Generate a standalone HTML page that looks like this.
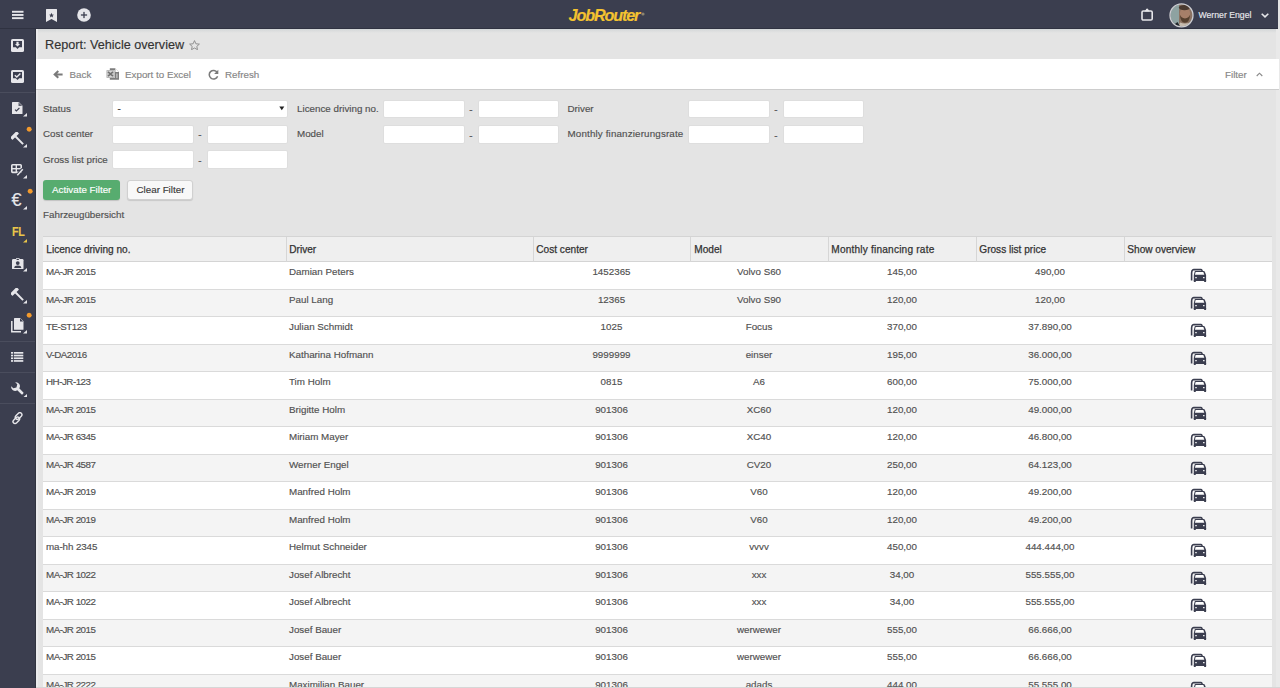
<!DOCTYPE html>
<html><head><meta charset="utf-8"><style>
*{margin:0;padding:0;box-sizing:border-box}
html,body{width:1280px;height:688px;overflow:hidden;background:#e4e4e4;font-family:"Liberation Sans",sans-serif;color:#505050}
.t{position:absolute;white-space:nowrap;line-height:10px;font-size:9.8px;-webkit-text-stroke:0.15px currentColor}
.abs{position:absolute;display:block}
#top{position:absolute;left:0;top:0;width:1278px;height:29px;background:#3b3e4f;border-bottom:1px solid #2f3241}
#side{position:absolute;left:0;top:29px;width:36px;height:659px;background:#3b3e4f;border-right:1px solid #30333f}
.sep{position:absolute;left:0;width:35px;height:1px;background:#4a4d5d}
#tb{position:absolute;left:36px;top:59px;width:1243px;height:31px;background:#fff;border-bottom:1px solid #cdcdcd}
.tbt{color:#858585}
.inp{position:absolute;background:#fff;border-radius:2px;border:1px solid #dedede}
.hd{color:#333;-webkit-text-stroke:0.25px #333;font-size:10.1px}
.c{text-align:center}
</style></head><body>
<div class="abs" style="left:36px;top:29px;width:1240px;height:3.5px;background:linear-gradient(#d3d6d8,#e4e4e4)"></div>
<div id="top"></div>
<div id="side"></div>
<div class="abs" style="left:36px;top:29px;width:2px;height:659px;background:#ebebed"></div>
<div class="abs" style="left:1276px;top:29px;width:4px;height:659px;background:#e9e9e9"></div>
<div class="sep" style="top:92px"></div>
<div class="sep" style="top:341px"></div>
<div class="sep" style="top:372px"></div>
<div class="sep" style="top:403px"></div>
<svg class="abs" style="left:12px;top:10px" width="12" height="10" viewBox="0 0 12 10"><rect x="0" y="0.8" width="11.5" height="1.9" fill="#e6e6ea"/><rect x="0" y="4" width="11.5" height="1.9" fill="#e6e6ea"/><rect x="0" y="7.2" width="11.5" height="1.9" fill="#e6e6ea"/></svg>
<svg class="abs" style="left:46px;top:8.5px" width="11" height="13" viewBox="0 0 11 13"><path d="M0 0.5Q0 0 0.5 0H10.5Q11 0 11 0.5V13L5.5 10L0 13Z" fill="#e6e6ea"/><path d="M5.5 3.8L6.2 5.6L8 5.7L6.6 6.8L7.1 8.6L5.5 7.6L3.9 8.6L4.4 6.8L3 5.7L4.8 5.6Z" fill="#3b3e4f"/></svg>
<svg class="abs" style="left:77px;top:7.5px" width="14" height="14" viewBox="0 0 14 14"><circle cx="7" cy="7" r="6.8" fill="#e6e6ea"/><rect x="3.9" y="6.35" width="6.2" height="1.3" fill="#3b3e4f"/><rect x="6.35" y="3.9" width="1.3" height="6.2" fill="#3b3e4f"/></svg>
<div class="t " style="left:568.6px;top:7.0px;font-size:16.2px;line-height:17px;font-weight:bold;font-style:italic;color:#f4c330;letter-spacing:-1.15px">JobRouter</div>
<svg class="abs" style="left:640.5px;top:12px" width="4" height="4" viewBox="0 0 4 4"><circle cx="2" cy="2" r="1.6" fill="#8a8470"/></svg>
<svg class="abs" style="left:1141px;top:8px" width="12" height="13" viewBox="0 0 12 13"><rect x="1" y="3" width="10.2" height="9" rx="1.3" fill="none" stroke="#e6e6ea" stroke-width="1.6"/><path d="M3.6 3.4Q3.8 2.4 4.6 2.2Q4.8 0.5 6.1 0.5Q7.4 0.5 7.6 2.2Q8.4 2.4 8.6 3.4Z" fill="#e6e6ea"/></svg>
<svg class="abs" style="left:1168.5px;top:2.5px" width="25" height="25" viewBox="0 0 25 25"><defs><clipPath id="av"><circle cx="12.5" cy="12.3" r="11"/></clipPath></defs>
<g clip-path="url(#av)"><rect width="25" height="25" fill="#8ea2a1"/>
<rect x="10" y="0" width="15" height="25" fill="#8b7262"/>
<ellipse cx="16" cy="11" rx="5.3" ry="6.8" fill="#a67f69"/>
<ellipse cx="15.5" cy="4.6" rx="5.6" ry="2.6" fill="#4a3a30"/>
<path d="M10.8 11.5Q11.5 19.5 16 19.8Q20.5 19.5 21.2 11.5Q20 15 16 15.5Q12 15 10.8 11.5Z" fill="#55402f"/>
<path d="M9 25L11 19.5Q16 21.5 21 19.5L25 22V25Z" fill="#c6bbae"/>
<path d="M2 24L8.5 19L12 25Z" fill="#22262a"/></g>
<circle cx="12.5" cy="12.3" r="11.5" fill="none" stroke="#cdcdd1" stroke-width="1.3"/></svg>
<div class="t " style="left:1198.5px;top:10.6px;font-size:8.7px;line-height:9px;color:#e8e8ec">Werner Engel</div>
<svg class="abs" style="left:1261px;top:12.5px" width="8" height="5" viewBox="0 0 8 5"><path d="M0.7 0.7L4 3.9L7.3 0.7" fill="none" stroke="#e6e6ea" stroke-width="1.6"/></svg>
<svg class="abs" style="left:11px;top:39px" width="13" height="13" viewBox="0 0 13 13"><rect width="13" height="13" rx="1.6" fill="#e6e6ea"/><path d="M2 2H11V8.3H8.2L6.5 10L4.8 8.3H2Z" fill="#3b3e4f"/><path d="M5.4 2.8H7.6V5H9L6.5 7.6L4 5H5.4Z" fill="#e6e6ea"/></svg>
<svg class="abs" style="left:11px;top:70px" width="13" height="13" viewBox="0 0 13 13"><rect width="13" height="13" rx="1.6" fill="#e6e6ea"/><path d="M2 2H11V8.3H8.2L6.5 10L4.8 8.3H2Z" fill="#3b3e4f"/><path d="M3.8 5.2L5.8 7.1L9.4 3.5" fill="none" stroke="#e6e6ea" stroke-width="1.4"/></svg>
<svg class="abs" style="left:12.3px;top:102px" width="11" height="12" viewBox="0 0 11 12"><path d="M0 0.6Q0 0 0.6 0H6.8L10.5 3.7V11.4Q10.5 12 9.9 12H0.6Q0 12 0 11.4Z" fill="#e6e6ea"/><path d="M6.5 0.3V4H10.2Z" fill="#3b3e4f" opacity="0.8"/><path d="M3 7.6L4.4 9L7.4 6" fill="none" stroke="#3b3e4f" stroke-width="1.1"/></svg>
<svg class="abs" style="left:23px;top:113px" width="4" height="3.5" viewBox="0 0 4 3.5"><path d="M4 0V3.5H0Z" fill="#e6e6ea"/></svg>
<svg class="abs" style="left:11px;top:132px" width="14" height="14" viewBox="0 0 14 14"><g transform="rotate(-45 7 7)"><rect x="2.4" y="0.4" width="9.2" height="3.4" rx="0.6" fill="#e6e6ea"/><rect x="6" y="3.2" width="2" height="11" fill="#e6e6ea"/></g></svg>
<svg class="abs" style="left:23.3px;top:144.3px" width="4" height="3.5" viewBox="0 0 4 3.5"><path d="M4 0V3.5H0Z" fill="#e6e6ea"/></svg>
<svg class="abs" style="left:26.400000000000002px;top:125.99999999999999px" width="6.4" height="6.4" viewBox="0 0 6.4 6.4"><circle cx="3.2" cy="3.2" r="2.5" fill="#f39a2c"/></svg>
<svg class="abs" style="left:11px;top:163.5px" width="13" height="12" viewBox="0 0 13 12"><rect x="0.8" y="0.8" width="9.4" height="7.6" rx="0.8" fill="none" stroke="#e6e6ea" stroke-width="1.6"/><rect x="0.8" y="4" width="9.4" height="1.4" fill="#e6e6ea"/><rect x="4.6" y="0.8" width="1.4" height="7.6" fill="#e6e6ea"/><path d="M6.5 11L11.5 5" stroke="#3b3e4f" stroke-width="3"/><path d="M6.3 11.2L11.8 5.2" stroke="#e6e6ea" stroke-width="1.5"/></svg>
<svg class="abs" style="left:23px;top:175px" width="4" height="3.5" viewBox="0 0 4 3.5"><path d="M4 0V3.5H0Z" fill="#e6e6ea"/></svg>
<div class="t " style="left:11.4px;top:191.2px;font-size:18px;line-height:18px;color:#e6e6ea">&euro;</div>
<svg class="abs" style="left:23px;top:206px" width="4" height="3.5" viewBox="0 0 4 3.5"><path d="M4 0V3.5H0Z" fill="#e6e6ea"/></svg>
<svg class="abs" style="left:26.6px;top:187.5px" width="6.4" height="6.4" viewBox="0 0 6.4 6.4"><circle cx="3.2" cy="3.2" r="2.5" fill="#f39a2c"/></svg>
<div class="t " style="left:12.2px;top:226.2px;font-size:13px;line-height:12px;font-weight:bold;color:#eac64a;letter-spacing:-0.4px;transform:scaleX(0.82);transform-origin:0 0">FL</div>
<svg class="abs" style="left:23px;top:239px" width="4" height="3.5" viewBox="0 0 4 3.5"><path d="M4 0V3.5H0Z" fill="#eac64a"/></svg>
<svg class="abs" style="left:12px;top:257.5px" width="11.5" height="11.5" viewBox="0 0 11.5 11.5"><rect x="0" y="1" width="11.5" height="10.5" rx="1.2" fill="#e6e6ea"/><rect x="4" y="0" width="3.5" height="2.4" rx="0.6" fill="#e6e6ea"/><rect x="4.6" y="0.8" width="2.3" height="1.2" fill="#3b3e4f"/><circle cx="5.75" cy="5.1" r="1.9" fill="#3b3e4f"/><path d="M2.2 9.9Q2.4 7.5 5.75 7.5Q9.1 7.5 9.3 9.9Z" fill="#3b3e4f"/></svg>
<svg class="abs" style="left:23px;top:268px" width="4" height="3.5" viewBox="0 0 4 3.5"><path d="M4 0V3.5H0Z" fill="#e6e6ea"/></svg>
<svg class="abs" style="left:11px;top:288px" width="14" height="14" viewBox="0 0 14 14"><g transform="rotate(-45 7 7)"><rect x="2.4" y="0.4" width="9.2" height="3.4" rx="0.6" fill="#e6e6ea"/><rect x="6" y="3.2" width="2" height="11" fill="#e6e6ea"/></g></svg>
<svg class="abs" style="left:23.3px;top:300px" width="4" height="3.5" viewBox="0 0 4 3.5"><path d="M4 0V3.5H0Z" fill="#e6e6ea"/></svg>
<svg class="abs" style="left:11px;top:318px" width="13" height="14.5" viewBox="0 0 13 14.5"><path d="M0.8 3V13.7H10" fill="none" stroke="#e6e6ea" stroke-width="1.5"/><path d="M3 0.6Q3 0 3.6 0H9.2L12.5 3.3V11.2Q12.5 11.8 11.9 11.8H3.6Q3 11.8 3 11.2Z" fill="#e6e6ea"/><path d="M9 0.3V3.5H12.2Z" fill="#3b3e4f"/></svg>
<svg class="abs" style="left:23px;top:330px" width="4" height="3.5" viewBox="0 0 4 3.5"><path d="M4 0V3.5H0Z" fill="#e6e6ea"/></svg>
<svg class="abs" style="left:26.2px;top:312.3px" width="6.4" height="6.4" viewBox="0 0 6.4 6.4"><circle cx="3.2" cy="3.2" r="2.5" fill="#f39a2c"/></svg>
<svg class="abs" style="left:11.3px;top:351.8px" width="12.3" height="10" viewBox="0 0 12.3 10"><g fill="#e6e6ea"><rect x="0" y="0" width="2" height="1.7"/><rect x="2.8" y="0" width="9.5" height="1.7"/><rect x="0" y="2.7" width="2" height="1.7"/><rect x="2.8" y="2.7" width="9.5" height="1.7"/><rect x="0" y="5.4" width="2" height="1.7"/><rect x="2.8" y="5.4" width="9.5" height="1.7"/><rect x="0" y="8.1" width="2" height="1.7"/><rect x="2.8" y="8.1" width="9.5" height="1.7"/></g></svg>
<svg class="abs" style="left:10.5px;top:381.5px" width="14" height="14" viewBox="0 0 14 14"><g transform="rotate(-45 7 7)"><path d="M4.2 0.2A4 4 0 0 0 5.6 7.4V13.2Q5.6 14 7 14Q8.4 14 8.4 13.2V7.4A4 4 0 0 0 9.8 0.2V3.2L7 4.8L4.2 3.2Z" fill="#e6e6ea"/></g></svg>
<svg class="abs" style="left:23.4px;top:393.5px" width="4" height="3.5" viewBox="0 0 4 3.5"><path d="M4 0V3.5H0Z" fill="#e6e6ea"/></svg>
<svg class="abs" style="left:11px;top:412.3px" width="13" height="13" viewBox="0 0 13 13"><g fill="none" stroke="#e6e6ea" stroke-width="1.4"><rect x="3.80" y="2.00" width="7.6" height="4.0" rx="2.0" transform="rotate(-45 7.6 4.0)"/><rect x="1.50" y="6.30" width="7.6" height="4.0" rx="2.0" transform="rotate(-45 5.3 8.3)"/></g></svg>
<div class="t " style="left:45px;top:39px;font-size:12.65px;line-height:13px;color:#333">Report: Vehicle overview</div>
<svg class="abs" style="left:189px;top:39.8px" width="11" height="10" viewBox="0 0 11 10"><path d="M5.5 0.6L6.9 3.8L10.4 4.1L7.8 6.4L8.5 9.7L5.5 8L2.5 9.7L3.2 6.4L0.6 4.1L4.1 3.8Z" fill="none" stroke="#888" stroke-width="0.9"/></svg>
<div id="tb"></div>
<svg class="abs" style="left:52.5px;top:69.5px" width="10" height="9" viewBox="0 0 10 9"><path d="M9.6 4.4H2.5M5.3 1.1L1.7 4.4L5.3 7.7" fill="none" stroke="#7a7a7a" stroke-width="2.05"/></svg>
<div class="t tbt" style="left:69.5px;top:69.5px;">Back</div>
<svg class="abs" style="left:106px;top:68px" width="14" height="12" viewBox="0 0 14 12"><path d="M3.8 0.3H9.2L13 4V11.8H3.8Z" fill="#7d7d7d"/><path d="M9.4 0.3V4H13Z" fill="#fff"/><rect x="0.3" y="2" width="8.4" height="8" fill="#fff"/><rect x="0.9" y="2.6" width="7.2" height="6.8" fill="#d6d6d6" stroke="#aaa" stroke-width="0.8"/><path d="M2 3.8L7 8.2M7 3.8L2 8.2" stroke="#707070" stroke-width="1.6"/><rect x="10" y="5.5" width="1.7" height="4.6" fill="#b5b5b5"/></svg>
<div class="t tbt" style="left:125px;top:69.5px;">Export to Excel</div>
<svg class="abs" style="left:207.5px;top:69px" width="11" height="11" viewBox="0 0 11 11"><path d="M9.2 3.4A4.3 4.3 0 1 0 9.6 7.2" fill="none" stroke="#7a7a7a" stroke-width="1.5"/><path d="M10.3 0.8V5H6.1Z" fill="#7a7a7a"/></svg>
<div class="t tbt" style="left:225px;top:69.5px;">Refresh</div>
<div class="t tbt" style="left:1225px;top:69.5px;">Filter</div>
<svg class="abs" style="left:1255.5px;top:71.5px" width="7" height="5" viewBox="0 0 7 5"><path d="M0.7 4L3.5 1.2L6.3 4" fill="none" stroke="#8a8a8a" stroke-width="1.15"/></svg>
<div class="t " style="left:43px;top:103.5px;">Status</div>
<div class="t " style="left:43px;top:129px;">Cost center</div>
<div class="t " style="left:43px;top:154.5px;">Gross list price</div>
<div class="t " style="left:297px;top:103.5px;">Licence driving no.</div>
<div class="t " style="left:297px;top:129px;">Model</div>
<div class="t " style="left:567.5px;top:103.5px;">Driver</div>
<div class="t " style="left:567.5px;top:129px;letter-spacing:0.15px">Monthly finanzierungsrate</div>
<div class="inp" style="left:112px;top:99.5px;width:176px;height:18.5px"></div>
<div class="t " style="left:117.5px;top:103.5px;color:#333">-</div>
<svg class="abs" style="left:279px;top:105.5px" width="6" height="5" viewBox="0 0 6 5"><path d="M0.3 0.5H5.3L2.8 4.3Z" fill="#222"/></svg>
<div class="inp" style="left:112px;top:124.5px;width:81.5px;height:19.5px"></div>
<div class="inp" style="left:206.5px;top:124.5px;width:81.5px;height:19.5px"></div>
<div class="t " style="left:198.3px;top:130.1px;">-</div>
<div class="inp" style="left:112px;top:150px;width:81.5px;height:19px"></div>
<div class="inp" style="left:206.5px;top:150px;width:81.5px;height:19px"></div>
<div class="t " style="left:198.3px;top:155.6px;">-</div>
<div class="inp" style="left:383px;top:99.5px;width:81.5px;height:18.5px"></div>
<div class="inp" style="left:477.5px;top:99.5px;width:81.5px;height:18.5px"></div>
<div class="t " style="left:469.2px;top:105.1px;">-</div>
<div class="inp" style="left:688px;top:99.5px;width:81.5px;height:18.5px"></div>
<div class="inp" style="left:782.5px;top:99.5px;width:81.5px;height:18.5px"></div>
<div class="t " style="left:774.3px;top:105.1px;">-</div>
<div class="inp" style="left:383px;top:125px;width:81.5px;height:19px"></div>
<div class="inp" style="left:477.5px;top:125px;width:81.5px;height:19px"></div>
<div class="t " style="left:469.2px;top:130.6px;">-</div>
<div class="inp" style="left:688px;top:125px;width:81.5px;height:19px"></div>
<div class="inp" style="left:782.5px;top:125px;width:81.5px;height:19px"></div>
<div class="t " style="left:774.3px;top:130.6px;">-</div>
<div class="abs" style="left:43px;top:180px;width:77px;height:19.5px;border-radius:3px;background:#57ac6f;box-shadow:0 1px 1px rgba(0,0,0,.15)"></div>
<div class="t " style="left:52px;top:185px;color:#fff">Activate Filter</div>
<div class="abs" style="left:127px;top:179.5px;width:66px;height:20px;border-radius:3px;background:#f8f8f8;border:1px solid #d0d0d0;box-shadow:0 1px 1px rgba(0,0,0,.12)"></div>
<div class="t " style="left:136.5px;top:184.6px;color:#3a3a3a">Clear Filter</div>
<div class="t " style="left:43px;top:209.8px;">Fahrzeug&uuml;bersicht</div>
<div class="abs" style="left:43px;top:236px;width:1229px;height:452px;background:#fff"></div>
<div class="abs" style="left:43px;top:236px;width:1229px;height:26px;background:#efefef;border-top:1px solid #d4d4d4;border-bottom:1px solid #d4d4d4"></div>
<div class="abs" style="left:286px;top:237px;width:1px;height:24.5px;background:#d6d6d6"></div>
<div class="abs" style="left:533px;top:237px;width:1px;height:24.5px;background:#d6d6d6"></div>
<div class="abs" style="left:690px;top:237px;width:1px;height:24.5px;background:#d6d6d6"></div>
<div class="abs" style="left:828px;top:237px;width:1px;height:24.5px;background:#d6d6d6"></div>
<div class="abs" style="left:976px;top:237px;width:1px;height:24.5px;background:#d6d6d6"></div>
<div class="abs" style="left:1124px;top:237px;width:1px;height:24.5px;background:#d6d6d6"></div>
<div class="t hd" style="left:46.3px;top:245px;">Licence driving no.</div>
<div class="t hd" style="left:289.3px;top:245px;">Driver</div>
<div class="t hd" style="left:536.3px;top:245px;">Cost center</div>
<div class="t hd" style="left:694.3px;top:245px;">Model</div>
<div class="t hd" style="left:831.3px;top:245px;letter-spacing:0.2px">Monthly financing rate</div>
<div class="t hd" style="left:979.3px;top:245px;">Gross list price</div>
<div class="t hd" style="left:1127.3px;top:245px;">Show overview</div>
<div class="abs" style="left:43px;top:262.3px;width:1229px;height:27.5px;background:#fff;border-bottom:1px solid #dadada"></div>
<div class="t " style="left:46px;top:267.2px;letter-spacing:-0.5px">MA-JR 2015</div>
<div class="t " style="left:289px;top:267.2px;">Damian Peters</div>
<div class="t c" style="left:533px;top:267.2px;width:157px">1452365</div>
<div class="t c" style="left:690px;top:267.2px;width:138px">Volvo S60</div>
<div class="t c" style="left:828px;top:267.2px;width:148px">145,00</div>
<div class="t c" style="left:976px;top:267.2px;width:148px">490,00</div>
<svg class="abs" style="left:1190px;top:268.1px" width="17" height="15" viewBox="0 0 17 15"><path d="M1.6 12.4V5Q1.7 2.6 2.7 2Q3.1 1.6 3.8 1.6H10.8Q11.6 1.6 11.9 2.3L12.6 3.6" fill="none" stroke="#3b3e4f" stroke-width="1.6"/><path d="M2.4 4.5L3.3 3H5V12.4H2.4Z" fill="#fff" opacity="0"/><path d="M5.3 3H13.8Q14.5 3 14.8 3.7L16.1 7V13H3.8V7L4.6 3.7Q4.8 3 5.3 3Z" fill="#3b3e4f"/><path d="M5.7 4H13.3L14.3 6.7H4.9Z" fill="#fff"/><rect x="5.2" y="8.9" width="1.6" height="1.4" rx="0.5" fill="#fff"/><rect x="13" y="8.9" width="1.6" height="1.4" rx="0.5" fill="#fff"/><rect x="3.8" y="12" width="2" height="2" rx="0.6" fill="#3b3e4f"/><rect x="14.1" y="12" width="2" height="2" rx="0.6" fill="#3b3e4f"/></svg>
<div class="abs" style="left:43px;top:289.8px;width:1229px;height:27.5px;background:#f4f4f4;border-bottom:1px solid #dadada"></div>
<div class="t " style="left:46px;top:294.7px;letter-spacing:-0.5px">MA-JR 2015</div>
<div class="t " style="left:289px;top:294.7px;">Paul Lang</div>
<div class="t c" style="left:533px;top:294.7px;width:157px">12365</div>
<div class="t c" style="left:690px;top:294.7px;width:138px">Volvo S90</div>
<div class="t c" style="left:828px;top:294.7px;width:148px">120,00</div>
<div class="t c" style="left:976px;top:294.7px;width:148px">120,00</div>
<svg class="abs" style="left:1190px;top:295.6px" width="17" height="15" viewBox="0 0 17 15"><path d="M1.6 12.4V5Q1.7 2.6 2.7 2Q3.1 1.6 3.8 1.6H10.8Q11.6 1.6 11.9 2.3L12.6 3.6" fill="none" stroke="#3b3e4f" stroke-width="1.6"/><path d="M2.4 4.5L3.3 3H5V12.4H2.4Z" fill="#fff" opacity="0"/><path d="M5.3 3H13.8Q14.5 3 14.8 3.7L16.1 7V13H3.8V7L4.6 3.7Q4.8 3 5.3 3Z" fill="#3b3e4f"/><path d="M5.7 4H13.3L14.3 6.7H4.9Z" fill="#fff"/><rect x="5.2" y="8.9" width="1.6" height="1.4" rx="0.5" fill="#fff"/><rect x="13" y="8.9" width="1.6" height="1.4" rx="0.5" fill="#fff"/><rect x="3.8" y="12" width="2" height="2" rx="0.6" fill="#3b3e4f"/><rect x="14.1" y="12" width="2" height="2" rx="0.6" fill="#3b3e4f"/></svg>
<div class="abs" style="left:43px;top:317.3px;width:1229px;height:27.5px;background:#fff;border-bottom:1px solid #dadada"></div>
<div class="t " style="left:46px;top:322.2px;letter-spacing:-0.5px">TE-ST123</div>
<div class="t " style="left:289px;top:322.2px;">Julian Schmidt</div>
<div class="t c" style="left:533px;top:322.2px;width:157px">1025</div>
<div class="t c" style="left:690px;top:322.2px;width:138px">Focus</div>
<div class="t c" style="left:828px;top:322.2px;width:148px">370,00</div>
<div class="t c" style="left:976px;top:322.2px;width:148px">37.890,00</div>
<svg class="abs" style="left:1190px;top:323.1px" width="17" height="15" viewBox="0 0 17 15"><path d="M1.6 12.4V5Q1.7 2.6 2.7 2Q3.1 1.6 3.8 1.6H10.8Q11.6 1.6 11.9 2.3L12.6 3.6" fill="none" stroke="#3b3e4f" stroke-width="1.6"/><path d="M2.4 4.5L3.3 3H5V12.4H2.4Z" fill="#fff" opacity="0"/><path d="M5.3 3H13.8Q14.5 3 14.8 3.7L16.1 7V13H3.8V7L4.6 3.7Q4.8 3 5.3 3Z" fill="#3b3e4f"/><path d="M5.7 4H13.3L14.3 6.7H4.9Z" fill="#fff"/><rect x="5.2" y="8.9" width="1.6" height="1.4" rx="0.5" fill="#fff"/><rect x="13" y="8.9" width="1.6" height="1.4" rx="0.5" fill="#fff"/><rect x="3.8" y="12" width="2" height="2" rx="0.6" fill="#3b3e4f"/><rect x="14.1" y="12" width="2" height="2" rx="0.6" fill="#3b3e4f"/></svg>
<div class="abs" style="left:43px;top:344.8px;width:1229px;height:27.5px;background:#f4f4f4;border-bottom:1px solid #dadada"></div>
<div class="t " style="left:46px;top:349.7px;letter-spacing:-0.5px">V-DA2016</div>
<div class="t " style="left:289px;top:349.7px;">Katharina Hofmann</div>
<div class="t c" style="left:533px;top:349.7px;width:157px">9999999</div>
<div class="t c" style="left:690px;top:349.7px;width:138px">einser</div>
<div class="t c" style="left:828px;top:349.7px;width:148px">195,00</div>
<div class="t c" style="left:976px;top:349.7px;width:148px">36.000,00</div>
<svg class="abs" style="left:1190px;top:350.6px" width="17" height="15" viewBox="0 0 17 15"><path d="M1.6 12.4V5Q1.7 2.6 2.7 2Q3.1 1.6 3.8 1.6H10.8Q11.6 1.6 11.9 2.3L12.6 3.6" fill="none" stroke="#3b3e4f" stroke-width="1.6"/><path d="M2.4 4.5L3.3 3H5V12.4H2.4Z" fill="#fff" opacity="0"/><path d="M5.3 3H13.8Q14.5 3 14.8 3.7L16.1 7V13H3.8V7L4.6 3.7Q4.8 3 5.3 3Z" fill="#3b3e4f"/><path d="M5.7 4H13.3L14.3 6.7H4.9Z" fill="#fff"/><rect x="5.2" y="8.9" width="1.6" height="1.4" rx="0.5" fill="#fff"/><rect x="13" y="8.9" width="1.6" height="1.4" rx="0.5" fill="#fff"/><rect x="3.8" y="12" width="2" height="2" rx="0.6" fill="#3b3e4f"/><rect x="14.1" y="12" width="2" height="2" rx="0.6" fill="#3b3e4f"/></svg>
<div class="abs" style="left:43px;top:372.3px;width:1229px;height:27.5px;background:#fff;border-bottom:1px solid #dadada"></div>
<div class="t " style="left:46px;top:377.2px;letter-spacing:-0.5px">HH-JR-123</div>
<div class="t " style="left:289px;top:377.2px;">Tim Holm</div>
<div class="t c" style="left:533px;top:377.2px;width:157px">0815</div>
<div class="t c" style="left:690px;top:377.2px;width:138px">A6</div>
<div class="t c" style="left:828px;top:377.2px;width:148px">600,00</div>
<div class="t c" style="left:976px;top:377.2px;width:148px">75.000,00</div>
<svg class="abs" style="left:1190px;top:378.1px" width="17" height="15" viewBox="0 0 17 15"><path d="M1.6 12.4V5Q1.7 2.6 2.7 2Q3.1 1.6 3.8 1.6H10.8Q11.6 1.6 11.9 2.3L12.6 3.6" fill="none" stroke="#3b3e4f" stroke-width="1.6"/><path d="M2.4 4.5L3.3 3H5V12.4H2.4Z" fill="#fff" opacity="0"/><path d="M5.3 3H13.8Q14.5 3 14.8 3.7L16.1 7V13H3.8V7L4.6 3.7Q4.8 3 5.3 3Z" fill="#3b3e4f"/><path d="M5.7 4H13.3L14.3 6.7H4.9Z" fill="#fff"/><rect x="5.2" y="8.9" width="1.6" height="1.4" rx="0.5" fill="#fff"/><rect x="13" y="8.9" width="1.6" height="1.4" rx="0.5" fill="#fff"/><rect x="3.8" y="12" width="2" height="2" rx="0.6" fill="#3b3e4f"/><rect x="14.1" y="12" width="2" height="2" rx="0.6" fill="#3b3e4f"/></svg>
<div class="abs" style="left:43px;top:399.8px;width:1229px;height:27.5px;background:#f4f4f4;border-bottom:1px solid #dadada"></div>
<div class="t " style="left:46px;top:404.7px;letter-spacing:-0.5px">MA-JR 2015</div>
<div class="t " style="left:289px;top:404.7px;">Brigitte Holm</div>
<div class="t c" style="left:533px;top:404.7px;width:157px">901306</div>
<div class="t c" style="left:690px;top:404.7px;width:138px">XC60</div>
<div class="t c" style="left:828px;top:404.7px;width:148px">120,00</div>
<div class="t c" style="left:976px;top:404.7px;width:148px">49.000,00</div>
<svg class="abs" style="left:1190px;top:405.6px" width="17" height="15" viewBox="0 0 17 15"><path d="M1.6 12.4V5Q1.7 2.6 2.7 2Q3.1 1.6 3.8 1.6H10.8Q11.6 1.6 11.9 2.3L12.6 3.6" fill="none" stroke="#3b3e4f" stroke-width="1.6"/><path d="M2.4 4.5L3.3 3H5V12.4H2.4Z" fill="#fff" opacity="0"/><path d="M5.3 3H13.8Q14.5 3 14.8 3.7L16.1 7V13H3.8V7L4.6 3.7Q4.8 3 5.3 3Z" fill="#3b3e4f"/><path d="M5.7 4H13.3L14.3 6.7H4.9Z" fill="#fff"/><rect x="5.2" y="8.9" width="1.6" height="1.4" rx="0.5" fill="#fff"/><rect x="13" y="8.9" width="1.6" height="1.4" rx="0.5" fill="#fff"/><rect x="3.8" y="12" width="2" height="2" rx="0.6" fill="#3b3e4f"/><rect x="14.1" y="12" width="2" height="2" rx="0.6" fill="#3b3e4f"/></svg>
<div class="abs" style="left:43px;top:427.3px;width:1229px;height:27.5px;background:#fff;border-bottom:1px solid #dadada"></div>
<div class="t " style="left:46px;top:432.2px;letter-spacing:-0.5px">MA-JR 6345</div>
<div class="t " style="left:289px;top:432.2px;">Miriam Mayer</div>
<div class="t c" style="left:533px;top:432.2px;width:157px">901306</div>
<div class="t c" style="left:690px;top:432.2px;width:138px">XC40</div>
<div class="t c" style="left:828px;top:432.2px;width:148px">120,00</div>
<div class="t c" style="left:976px;top:432.2px;width:148px">46.800,00</div>
<svg class="abs" style="left:1190px;top:433.1px" width="17" height="15" viewBox="0 0 17 15"><path d="M1.6 12.4V5Q1.7 2.6 2.7 2Q3.1 1.6 3.8 1.6H10.8Q11.6 1.6 11.9 2.3L12.6 3.6" fill="none" stroke="#3b3e4f" stroke-width="1.6"/><path d="M2.4 4.5L3.3 3H5V12.4H2.4Z" fill="#fff" opacity="0"/><path d="M5.3 3H13.8Q14.5 3 14.8 3.7L16.1 7V13H3.8V7L4.6 3.7Q4.8 3 5.3 3Z" fill="#3b3e4f"/><path d="M5.7 4H13.3L14.3 6.7H4.9Z" fill="#fff"/><rect x="5.2" y="8.9" width="1.6" height="1.4" rx="0.5" fill="#fff"/><rect x="13" y="8.9" width="1.6" height="1.4" rx="0.5" fill="#fff"/><rect x="3.8" y="12" width="2" height="2" rx="0.6" fill="#3b3e4f"/><rect x="14.1" y="12" width="2" height="2" rx="0.6" fill="#3b3e4f"/></svg>
<div class="abs" style="left:43px;top:454.8px;width:1229px;height:27.5px;background:#f4f4f4;border-bottom:1px solid #dadada"></div>
<div class="t " style="left:46px;top:459.7px;letter-spacing:-0.5px">MA-JR 4587</div>
<div class="t " style="left:289px;top:459.7px;">Werner Engel</div>
<div class="t c" style="left:533px;top:459.7px;width:157px">901306</div>
<div class="t c" style="left:690px;top:459.7px;width:138px">CV20</div>
<div class="t c" style="left:828px;top:459.7px;width:148px">250,00</div>
<div class="t c" style="left:976px;top:459.7px;width:148px">64.123,00</div>
<svg class="abs" style="left:1190px;top:460.6px" width="17" height="15" viewBox="0 0 17 15"><path d="M1.6 12.4V5Q1.7 2.6 2.7 2Q3.1 1.6 3.8 1.6H10.8Q11.6 1.6 11.9 2.3L12.6 3.6" fill="none" stroke="#3b3e4f" stroke-width="1.6"/><path d="M2.4 4.5L3.3 3H5V12.4H2.4Z" fill="#fff" opacity="0"/><path d="M5.3 3H13.8Q14.5 3 14.8 3.7L16.1 7V13H3.8V7L4.6 3.7Q4.8 3 5.3 3Z" fill="#3b3e4f"/><path d="M5.7 4H13.3L14.3 6.7H4.9Z" fill="#fff"/><rect x="5.2" y="8.9" width="1.6" height="1.4" rx="0.5" fill="#fff"/><rect x="13" y="8.9" width="1.6" height="1.4" rx="0.5" fill="#fff"/><rect x="3.8" y="12" width="2" height="2" rx="0.6" fill="#3b3e4f"/><rect x="14.1" y="12" width="2" height="2" rx="0.6" fill="#3b3e4f"/></svg>
<div class="abs" style="left:43px;top:482.3px;width:1229px;height:27.5px;background:#fff;border-bottom:1px solid #dadada"></div>
<div class="t " style="left:46px;top:487.2px;letter-spacing:-0.5px">MA-JR 2019</div>
<div class="t " style="left:289px;top:487.2px;">Manfred Holm</div>
<div class="t c" style="left:533px;top:487.2px;width:157px">901306</div>
<div class="t c" style="left:690px;top:487.2px;width:138px">V60</div>
<div class="t c" style="left:828px;top:487.2px;width:148px">120,00</div>
<div class="t c" style="left:976px;top:487.2px;width:148px">49.200,00</div>
<svg class="abs" style="left:1190px;top:488.1px" width="17" height="15" viewBox="0 0 17 15"><path d="M1.6 12.4V5Q1.7 2.6 2.7 2Q3.1 1.6 3.8 1.6H10.8Q11.6 1.6 11.9 2.3L12.6 3.6" fill="none" stroke="#3b3e4f" stroke-width="1.6"/><path d="M2.4 4.5L3.3 3H5V12.4H2.4Z" fill="#fff" opacity="0"/><path d="M5.3 3H13.8Q14.5 3 14.8 3.7L16.1 7V13H3.8V7L4.6 3.7Q4.8 3 5.3 3Z" fill="#3b3e4f"/><path d="M5.7 4H13.3L14.3 6.7H4.9Z" fill="#fff"/><rect x="5.2" y="8.9" width="1.6" height="1.4" rx="0.5" fill="#fff"/><rect x="13" y="8.9" width="1.6" height="1.4" rx="0.5" fill="#fff"/><rect x="3.8" y="12" width="2" height="2" rx="0.6" fill="#3b3e4f"/><rect x="14.1" y="12" width="2" height="2" rx="0.6" fill="#3b3e4f"/></svg>
<div class="abs" style="left:43px;top:509.8px;width:1229px;height:27.5px;background:#f4f4f4;border-bottom:1px solid #dadada"></div>
<div class="t " style="left:46px;top:514.7px;letter-spacing:-0.5px">MA-JR 2019</div>
<div class="t " style="left:289px;top:514.7px;">Manfred Holm</div>
<div class="t c" style="left:533px;top:514.7px;width:157px">901306</div>
<div class="t c" style="left:690px;top:514.7px;width:138px">V60</div>
<div class="t c" style="left:828px;top:514.7px;width:148px">120,00</div>
<div class="t c" style="left:976px;top:514.7px;width:148px">49.200,00</div>
<svg class="abs" style="left:1190px;top:515.6px" width="17" height="15" viewBox="0 0 17 15"><path d="M1.6 12.4V5Q1.7 2.6 2.7 2Q3.1 1.6 3.8 1.6H10.8Q11.6 1.6 11.9 2.3L12.6 3.6" fill="none" stroke="#3b3e4f" stroke-width="1.6"/><path d="M2.4 4.5L3.3 3H5V12.4H2.4Z" fill="#fff" opacity="0"/><path d="M5.3 3H13.8Q14.5 3 14.8 3.7L16.1 7V13H3.8V7L4.6 3.7Q4.8 3 5.3 3Z" fill="#3b3e4f"/><path d="M5.7 4H13.3L14.3 6.7H4.9Z" fill="#fff"/><rect x="5.2" y="8.9" width="1.6" height="1.4" rx="0.5" fill="#fff"/><rect x="13" y="8.9" width="1.6" height="1.4" rx="0.5" fill="#fff"/><rect x="3.8" y="12" width="2" height="2" rx="0.6" fill="#3b3e4f"/><rect x="14.1" y="12" width="2" height="2" rx="0.6" fill="#3b3e4f"/></svg>
<div class="abs" style="left:43px;top:537.3px;width:1229px;height:27.5px;background:#fff;border-bottom:1px solid #dadada"></div>
<div class="t " style="left:46px;top:542.1999999999999px;letter-spacing:-0.1px">ma-hh 2345</div>
<div class="t " style="left:289px;top:542.1999999999999px;">Helmut Schneider</div>
<div class="t c" style="left:533px;top:542.1999999999999px;width:157px">901306</div>
<div class="t c" style="left:690px;top:542.1999999999999px;width:138px">vvvv</div>
<div class="t c" style="left:828px;top:542.1999999999999px;width:148px">450,00</div>
<div class="t c" style="left:976px;top:542.1999999999999px;width:148px">444.444,00</div>
<svg class="abs" style="left:1190px;top:543.0999999999999px" width="17" height="15" viewBox="0 0 17 15"><path d="M1.6 12.4V5Q1.7 2.6 2.7 2Q3.1 1.6 3.8 1.6H10.8Q11.6 1.6 11.9 2.3L12.6 3.6" fill="none" stroke="#3b3e4f" stroke-width="1.6"/><path d="M2.4 4.5L3.3 3H5V12.4H2.4Z" fill="#fff" opacity="0"/><path d="M5.3 3H13.8Q14.5 3 14.8 3.7L16.1 7V13H3.8V7L4.6 3.7Q4.8 3 5.3 3Z" fill="#3b3e4f"/><path d="M5.7 4H13.3L14.3 6.7H4.9Z" fill="#fff"/><rect x="5.2" y="8.9" width="1.6" height="1.4" rx="0.5" fill="#fff"/><rect x="13" y="8.9" width="1.6" height="1.4" rx="0.5" fill="#fff"/><rect x="3.8" y="12" width="2" height="2" rx="0.6" fill="#3b3e4f"/><rect x="14.1" y="12" width="2" height="2" rx="0.6" fill="#3b3e4f"/></svg>
<div class="abs" style="left:43px;top:564.8px;width:1229px;height:27.5px;background:#f4f4f4;border-bottom:1px solid #dadada"></div>
<div class="t " style="left:46px;top:569.6999999999999px;letter-spacing:-0.5px">MA-JR 1022</div>
<div class="t " style="left:289px;top:569.6999999999999px;">Josef Albrecht</div>
<div class="t c" style="left:533px;top:569.6999999999999px;width:157px">901306</div>
<div class="t c" style="left:690px;top:569.6999999999999px;width:138px">xxx</div>
<div class="t c" style="left:828px;top:569.6999999999999px;width:148px">34,00</div>
<div class="t c" style="left:976px;top:569.6999999999999px;width:148px">555.555,00</div>
<svg class="abs" style="left:1190px;top:570.5999999999999px" width="17" height="15" viewBox="0 0 17 15"><path d="M1.6 12.4V5Q1.7 2.6 2.7 2Q3.1 1.6 3.8 1.6H10.8Q11.6 1.6 11.9 2.3L12.6 3.6" fill="none" stroke="#3b3e4f" stroke-width="1.6"/><path d="M2.4 4.5L3.3 3H5V12.4H2.4Z" fill="#fff" opacity="0"/><path d="M5.3 3H13.8Q14.5 3 14.8 3.7L16.1 7V13H3.8V7L4.6 3.7Q4.8 3 5.3 3Z" fill="#3b3e4f"/><path d="M5.7 4H13.3L14.3 6.7H4.9Z" fill="#fff"/><rect x="5.2" y="8.9" width="1.6" height="1.4" rx="0.5" fill="#fff"/><rect x="13" y="8.9" width="1.6" height="1.4" rx="0.5" fill="#fff"/><rect x="3.8" y="12" width="2" height="2" rx="0.6" fill="#3b3e4f"/><rect x="14.1" y="12" width="2" height="2" rx="0.6" fill="#3b3e4f"/></svg>
<div class="abs" style="left:43px;top:592.3px;width:1229px;height:27.5px;background:#fff;border-bottom:1px solid #dadada"></div>
<div class="t " style="left:46px;top:597.1999999999999px;letter-spacing:-0.5px">MA-JR 1022</div>
<div class="t " style="left:289px;top:597.1999999999999px;">Josef Albrecht</div>
<div class="t c" style="left:533px;top:597.1999999999999px;width:157px">901306</div>
<div class="t c" style="left:690px;top:597.1999999999999px;width:138px">xxx</div>
<div class="t c" style="left:828px;top:597.1999999999999px;width:148px">34,00</div>
<div class="t c" style="left:976px;top:597.1999999999999px;width:148px">555.555,00</div>
<svg class="abs" style="left:1190px;top:598.0999999999999px" width="17" height="15" viewBox="0 0 17 15"><path d="M1.6 12.4V5Q1.7 2.6 2.7 2Q3.1 1.6 3.8 1.6H10.8Q11.6 1.6 11.9 2.3L12.6 3.6" fill="none" stroke="#3b3e4f" stroke-width="1.6"/><path d="M2.4 4.5L3.3 3H5V12.4H2.4Z" fill="#fff" opacity="0"/><path d="M5.3 3H13.8Q14.5 3 14.8 3.7L16.1 7V13H3.8V7L4.6 3.7Q4.8 3 5.3 3Z" fill="#3b3e4f"/><path d="M5.7 4H13.3L14.3 6.7H4.9Z" fill="#fff"/><rect x="5.2" y="8.9" width="1.6" height="1.4" rx="0.5" fill="#fff"/><rect x="13" y="8.9" width="1.6" height="1.4" rx="0.5" fill="#fff"/><rect x="3.8" y="12" width="2" height="2" rx="0.6" fill="#3b3e4f"/><rect x="14.1" y="12" width="2" height="2" rx="0.6" fill="#3b3e4f"/></svg>
<div class="abs" style="left:43px;top:619.8px;width:1229px;height:27.5px;background:#f4f4f4;border-bottom:1px solid #dadada"></div>
<div class="t " style="left:46px;top:624.6999999999999px;letter-spacing:-0.5px">MA-JR 2015</div>
<div class="t " style="left:289px;top:624.6999999999999px;">Josef Bauer</div>
<div class="t c" style="left:533px;top:624.6999999999999px;width:157px">901306</div>
<div class="t c" style="left:690px;top:624.6999999999999px;width:138px">werwewer</div>
<div class="t c" style="left:828px;top:624.6999999999999px;width:148px">555,00</div>
<div class="t c" style="left:976px;top:624.6999999999999px;width:148px">66.666,00</div>
<svg class="abs" style="left:1190px;top:625.5999999999999px" width="17" height="15" viewBox="0 0 17 15"><path d="M1.6 12.4V5Q1.7 2.6 2.7 2Q3.1 1.6 3.8 1.6H10.8Q11.6 1.6 11.9 2.3L12.6 3.6" fill="none" stroke="#3b3e4f" stroke-width="1.6"/><path d="M2.4 4.5L3.3 3H5V12.4H2.4Z" fill="#fff" opacity="0"/><path d="M5.3 3H13.8Q14.5 3 14.8 3.7L16.1 7V13H3.8V7L4.6 3.7Q4.8 3 5.3 3Z" fill="#3b3e4f"/><path d="M5.7 4H13.3L14.3 6.7H4.9Z" fill="#fff"/><rect x="5.2" y="8.9" width="1.6" height="1.4" rx="0.5" fill="#fff"/><rect x="13" y="8.9" width="1.6" height="1.4" rx="0.5" fill="#fff"/><rect x="3.8" y="12" width="2" height="2" rx="0.6" fill="#3b3e4f"/><rect x="14.1" y="12" width="2" height="2" rx="0.6" fill="#3b3e4f"/></svg>
<div class="abs" style="left:43px;top:647.3px;width:1229px;height:27.5px;background:#fff;border-bottom:1px solid #dadada"></div>
<div class="t " style="left:46px;top:652.1999999999999px;letter-spacing:-0.5px">MA-JR 2015</div>
<div class="t " style="left:289px;top:652.1999999999999px;">Josef Bauer</div>
<div class="t c" style="left:533px;top:652.1999999999999px;width:157px">901306</div>
<div class="t c" style="left:690px;top:652.1999999999999px;width:138px">werwewer</div>
<div class="t c" style="left:828px;top:652.1999999999999px;width:148px">555,00</div>
<div class="t c" style="left:976px;top:652.1999999999999px;width:148px">66.666,00</div>
<svg class="abs" style="left:1190px;top:653.0999999999999px" width="17" height="15" viewBox="0 0 17 15"><path d="M1.6 12.4V5Q1.7 2.6 2.7 2Q3.1 1.6 3.8 1.6H10.8Q11.6 1.6 11.9 2.3L12.6 3.6" fill="none" stroke="#3b3e4f" stroke-width="1.6"/><path d="M2.4 4.5L3.3 3H5V12.4H2.4Z" fill="#fff" opacity="0"/><path d="M5.3 3H13.8Q14.5 3 14.8 3.7L16.1 7V13H3.8V7L4.6 3.7Q4.8 3 5.3 3Z" fill="#3b3e4f"/><path d="M5.7 4H13.3L14.3 6.7H4.9Z" fill="#fff"/><rect x="5.2" y="8.9" width="1.6" height="1.4" rx="0.5" fill="#fff"/><rect x="13" y="8.9" width="1.6" height="1.4" rx="0.5" fill="#fff"/><rect x="3.8" y="12" width="2" height="2" rx="0.6" fill="#3b3e4f"/><rect x="14.1" y="12" width="2" height="2" rx="0.6" fill="#3b3e4f"/></svg>
<div class="abs" style="left:43px;top:674.8px;width:1229px;height:27.5px;background:#f4f4f4;border-bottom:1px solid #dadada"></div>
<div class="t " style="left:46px;top:679.6999999999999px;letter-spacing:-0.5px">MA-JR 2222</div>
<div class="t " style="left:289px;top:679.6999999999999px;">Maximilian Bauer</div>
<div class="t c" style="left:533px;top:679.6999999999999px;width:157px">901306</div>
<div class="t c" style="left:690px;top:679.6999999999999px;width:138px">adads</div>
<div class="t c" style="left:828px;top:679.6999999999999px;width:148px">444,00</div>
<div class="t c" style="left:976px;top:679.6999999999999px;width:148px">55.555,00</div>
<svg class="abs" style="left:1190px;top:680.5999999999999px" width="17" height="15" viewBox="0 0 17 15"><path d="M1.6 12.4V5Q1.7 2.6 2.7 2Q3.1 1.6 3.8 1.6H10.8Q11.6 1.6 11.9 2.3L12.6 3.6" fill="none" stroke="#3b3e4f" stroke-width="1.6"/><path d="M2.4 4.5L3.3 3H5V12.4H2.4Z" fill="#fff" opacity="0"/><path d="M5.3 3H13.8Q14.5 3 14.8 3.7L16.1 7V13H3.8V7L4.6 3.7Q4.8 3 5.3 3Z" fill="#3b3e4f"/><path d="M5.7 4H13.3L14.3 6.7H4.9Z" fill="#fff"/><rect x="5.2" y="8.9" width="1.6" height="1.4" rx="0.5" fill="#fff"/><rect x="13" y="8.9" width="1.6" height="1.4" rx="0.5" fill="#fff"/><rect x="3.8" y="12" width="2" height="2" rx="0.6" fill="#3b3e4f"/><rect x="14.1" y="12" width="2" height="2" rx="0.6" fill="#3b3e4f"/></svg>
<div class="abs" style="left:36px;top:687px;width:1244px;height:1px;background:#d6d6d6"></div>
</body></html>
